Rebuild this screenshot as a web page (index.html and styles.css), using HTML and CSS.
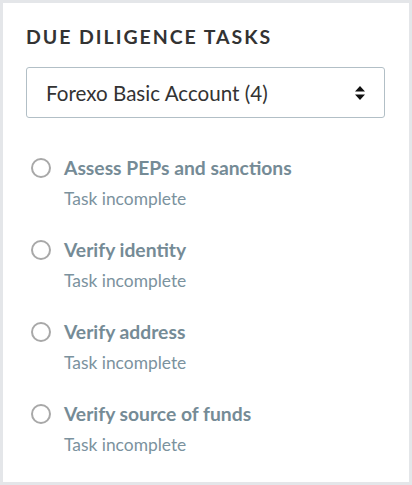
FILE: index.html
```html
<!DOCTYPE html>
<html>
<head>
<meta charset="utf-8">
<link rel="stylesheet" href="styles.css">
</head>
<body>
<div class="card">
  <h2 class="heading">DUE DILIGENCE TASKS</h2>
  <div class="select">
    <span class="select-text">Forexo Basic Account (4)</span>
    <svg class="select-arrow" width="10" height="14" viewBox="0 0 10 14"><path d="M5 0 L10 5.5 H0 Z M0 8.5 H10 L5 14 Z" fill="#111"/></svg>
  </div>
  <ul class="tasks">
    <li class="task"><span class="radio"></span><div class="task-body"><div class="task-title">Assess PEPs and sanctions</div><div class="task-status">Task incomplete</div></div></li>
    <li class="task"><span class="radio"></span><div class="task-body"><div class="task-title">Verify identity</div><div class="task-status">Task incomplete</div></div></li>
    <li class="task"><span class="radio"></span><div class="task-body"><div class="task-title">Verify address</div><div class="task-status">Task incomplete</div></div></li>
    <li class="task"><span class="radio"></span><div class="task-body"><div class="task-title">Verify source of funds</div><div class="task-status">Task incomplete</div></div></li>
  </ul>
</div>
</body>
</html>
```
FILE: styles.css
```css
html, body { margin: 0; padding: 0; }
body {
  background: #e4e6e9;
  font-family: Lato, "Open Sans", sans-serif;
  width: 412px;
  height: 485px;
  box-sizing: border-box;
  padding: 3px;
}
.card {
  background: #fff;
  height: 479px;
  box-sizing: border-box;
  padding: 22px 23px 0 23px;
}
.heading {
  margin: 0;
  font-size: 19.5px;
  font-weight: 700;
  letter-spacing: 1.95px;
  color: #333;
  line-height: 24px;
}
.select {
  margin-top: 18px;
  height: 51px;
  box-sizing: border-box;
  border: 1px solid #b2bfc6;
  border-radius: 3px;
  display: flex;
  align-items: center;
  padding: 0 19px;
  width: 359px;
}
.select-text {
  flex: 1;
  font-size: 20.6px;
  color: #333;
}
.select-arrow { display: block; }
.tasks {
  list-style: none;
  margin: 39px 0 0 0;
  padding: 0;
  display: flex;
  flex-direction: column;
  gap: 30px;
}
.task {
  display: flex;
  align-items: flex-start;
  gap: 13px;
  padding-left: 5px;
}
.radio {
  width: 20px;
  height: 20px;
  box-sizing: border-box;
  border: 2px solid #a8a8a8;
  border-radius: 50%;
  flex: none;
  margin-top: 1px;
}
.task-title {
  font-size: 19.3px;
  font-weight: 700;
  color: #758b96;
  line-height: 22px;
}
.task-status {
  font-size: 17.4px;
  color: #7b929e;
  margin-top: 10px;
  line-height: 20px;
}
```
